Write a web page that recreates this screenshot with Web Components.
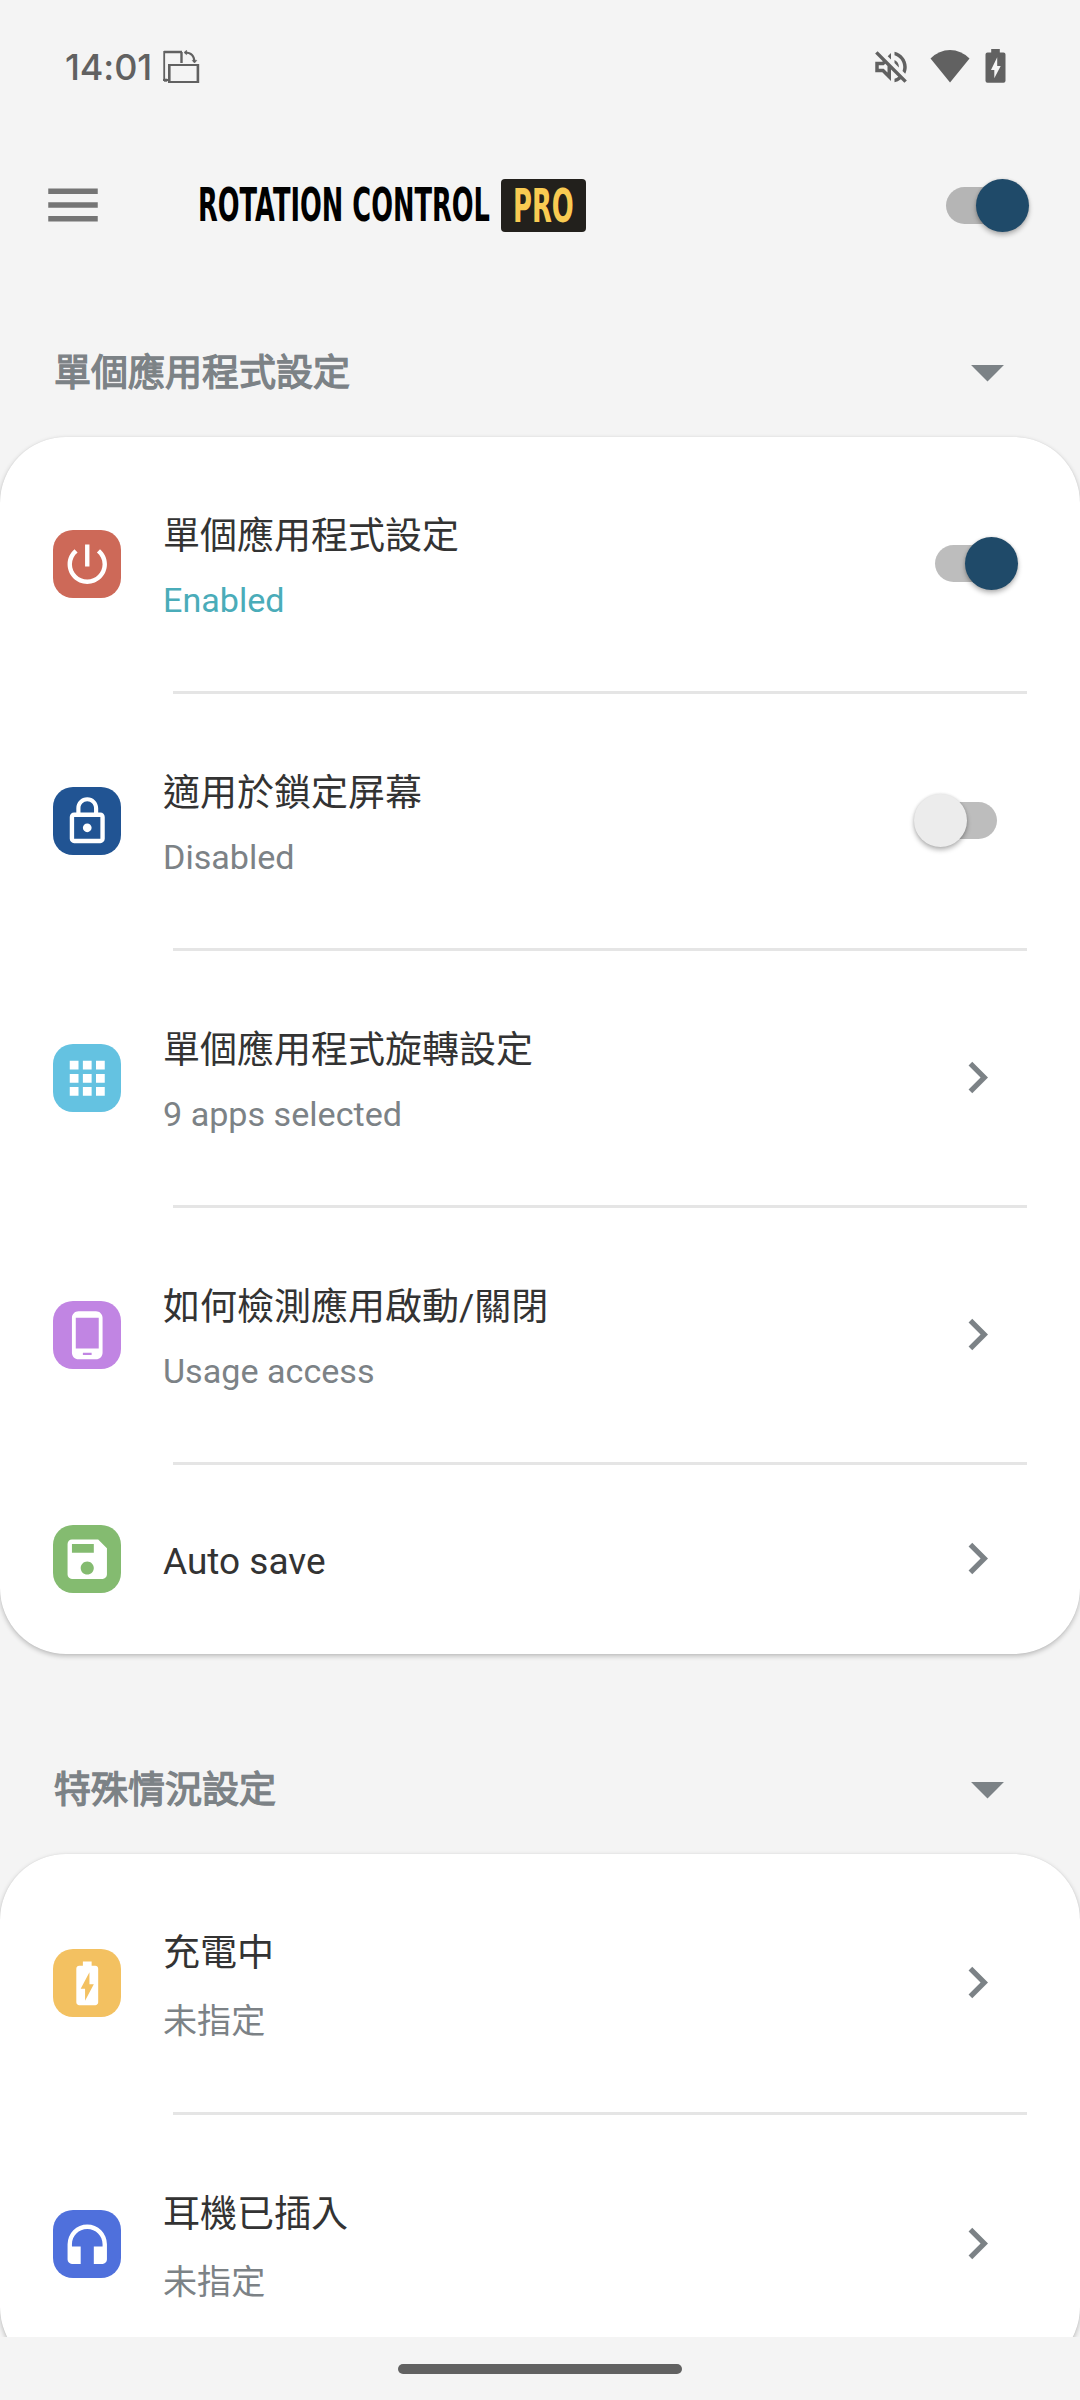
<!DOCTYPE html>
<html lang="zh-Hant">
<head>
<meta charset="utf-8">
<title>Rotation Control Pro</title>
<style>
    html, body {
        margin: 0;
        height: 100%;
    }
    body {
        --muted: #7c8286;
        --text: #333;
        --surface: #f4f4f4;
        --accent: #4aacb9;
        font-family: Roboto, "Noto Sans CJK TC", sans-serif;
        color: var(--text);
        background: var(--surface);
        overflow: hidden;
    }
</style>
</head>
<body>
<phone-screen>
    <status-bar slot="status" time="14:01"></status-bar>
    <app-bar slot="bar"></app-bar>
    <settings-section heading="單個應用程式設定">
        <settings-row icon="power" color="#cd6958" heading="單個應用程式設定" summary="Enabled" active>
            <toggle-switch slot="action" on></toggle-switch>
        </settings-row>
        <settings-row icon="lock" color="#215493" heading="適用於鎖定屏幕" summary="Disabled">
            <toggle-switch slot="action"></toggle-switch>
        </settings-row>
        <settings-row icon="apps" color="#64c2e1" heading="單個應用程式旋轉設定" summary="9 apps selected"></settings-row>
        <settings-row icon="phone" color="#c185e3" heading="如何檢測應用啟動/關閉" summary="Usage access"></settings-row>
        <settings-row icon="save" color="#84bb70" heading="Auto save"></settings-row>
    </settings-section>
    <settings-section heading="特殊情況設定">
        <settings-row icon="battery" color="#f3c161" heading="充電中" summary="未指定" tall></settings-row>
        <settings-row icon="headset" color="#4f70dc" heading="耳機已插入" summary="未指定" tall></settings-row>
    </settings-section>
    <nav-handle slot="nav"></nav-handle>
</phone-screen>

<script>
const ICONS = {
    power: 'M13 3h-2v10h2V3zm4.83 2.17l-1.42 1.42C17.99 7.86 19 9.81 19 12c0 3.87-3.13 7-7 7s-7-3.13-7-7c0-2.19 1.01-4.14 2.58-5.42L6.17 5.17C4.23 6.82 3 9.26 3 12c0 4.97 4.03 9 9 9s9-4.03 9-9c0-2.74-1.23-5.18-3.17-6.83z',
    lock: 'M12 17c1.1 0 2-.9 2-2s-.9-2-2-2-2 .9-2 2 .9 2 2 2zm6-9h-1V6c0-2.76-2.24-5-5-5S7 3.24 7 6v2H6c-1.1 0-2 .9-2 2v10c0 1.1.9 2 2 2h12c1.1 0 2-.9 2-2V10c0-1.1-.9-2-2-2zM8.9 6c0-1.71 1.39-3.1 3.1-3.1s3.1 1.39 3.1 3.1v2H8.9V6zM18 20H6V10h12v10z',
    apps: 'M4 8h4V4H4v4zm6 12h4v-4h-4v4zm-6 0h4v-4H4v4zm0-6h4v-4H4v4zm6 0h4v-4h-4v4zm6-10v4h4V4h-4zm-6 4h4V4h-4v4zm6 6h4v-4h-4v4zm0 6h4v-4h-4v4z',
    phone: 'M16 1H8C6.34 1 5 2.34 5 4v16c0 1.66 1.34 3 3 3h8c1.66 0 3-1.34 3-3V4c0-1.66-1.34-3-3-3zm-2 20h-4v-1h4v1zm3.25-3H6.75V4h10.5v14z',
    save: 'M17 3H5c-1.11 0-2 .9-2 2v14c0 1.1.89 2 2 2h14c1.1 0 2-.9 2-2V7l-4-4zm-5 16c-1.66 0-3-1.34-3-3s1.34-3 3-3 3 1.34 3 3-1.34 3-3 3zm3-10H5V5h10v4z',
    battery: 'M15.67 4H14V2h-4v2H8.33C7.6 4 7 4.6 7 5.33v15.33C7 21.4 7.6 22 8.33 22h7.33c.74 0 1.34-.6 1.34-1.33V5.33C17 4.6 16.4 4 15.67 4zM11 20v-5.5H9L13 7v5.5h2L11 20z',
    headset: 'M12 3a9 9 0 0 0-9 9v7c0 1.1.9 2 2 2h4v-8H5v-1c0-3.87 3.13-7 7-7s7 3.13 7 7v1h-4v8h4c1.1 0 2-.9 2-2v-7a9 9 0 0 0-9-9z',
    chevron: 'M10 6L8.59 7.41 13.17 12l-4.58 4.59L10 18l6-6z',
    dropdown: 'M7 10l5 5 5-5z',
    menu: 'M3 18h18v-2H3v2zm0-5h18v-2H3v2zm0-7v2h18V6H3z',
    muted: 'M4.34 2.93L2.93 4.34 7.29 8.7 7 9H3v6h4l5 5v-6.59l4.18 4.18c-.65.49-1.38.88-2.18 1.11v2.06a8.94 8.94 0 0 0 3.61-1.75l2.05 2.05 1.41-1.41L4.34 2.93zM10 15.17L7.83 13H5v-2h2.83l.88-.88L10 11.41v3.76zM19 12c0 .82-.15 1.61-.41 2.34l1.53 1.53c.56-1.17.88-2.48.88-3.87 0-4.28-2.99-7.86-7-8.77v2.06c2.89.86 5 3.54 5 6.71zm-7-8l-1.88 1.88L12 7.76zm4.5 8A4.5 4.5 0 0 0 14 7.97v1.79l2.48 2.48c.01-.08.02-.16.02-.24z'
};

/**
 * Inline svg for one of the 24px grid icons
 * @returns {string} HTML
 */
function icon(name) {
    return `<svg class='icon' viewBox='0 0 24 24' fill='currentColor'><path d='${ICONS[name]}'/></svg>`;
}

/**
 * Base for all elements: renders its template once
 */
class BaseElement extends HTMLElement {
    constructor() {
        super();
        this.attachShadow({ mode: 'open' });
    }

    connectedCallback() {
        this.shadowRoot.innerHTML = this.render();
    }
}

class PhoneScreen extends BaseElement {
    render() {
        return `
            <style>
                :host {
                    display: flex;
                    flex-direction: column;
                    height: 2400px;
                    width: 1080px;
                }
                main {
                    flex: 1;
                    min-height: 0;
                    overflow: hidden;
                    box-sizing: border-box;
                    padding-top: 28px;
                    display: flex;
                    flex-direction: column;
                    gap: 70px;
                }
            </style>
            <slot name='status'></slot>
            <slot name='bar'></slot>
            <main><slot></slot></main>
            <slot name='nav'></slot>
        `;
    }
}
customElements.define('phone-screen', PhoneScreen);

class StatusBar extends BaseElement {
    render() {
        return `
            <style>
                :host {
                    display: flex;
                    align-items: center;
                    box-sizing: border-box;
                    height: 132px;
                    padding: 2px 74px 0 65px;
                    color: #616161;
                    flex: none;
                }
                svg {
                    display: block;
                }
                .time {
                    font: 500 36px/44px Inter, sans-serif;
                    letter-spacing: -0.1px;
                    width: 98px;
                    margin-top: -1px;
                }
                .spacer {
                    flex: 1;
                }
                .icon {
                    width: 42px;
                    height: 42px;
                    margin-right: 18px;
                }
                .wifi {
                    margin-right: 15px;
                }
                .wifi, .battery {
                    margin-top: -2px;
                }
            </style>
            <span class='time'>${this.getAttribute('time')}</span>
            <svg width='37' height='34' viewBox='0 0 37 34' fill='none' stroke='currentColor'>
                <path d='M18.5 13V2M19 2H1' stroke-width='2.4'/>
                <path d='M1.2 1v30M0 30h5' stroke-width='1.8'/>
                <path d='M1 30.2h3.2' stroke-width='3'/>
                <path d='M6.3 14v19M34.9 14v19' stroke-width='2.6'/>
                <path d='M5.2 15.1h30.8M5.2 32.1h30.8' stroke-width='2'/>
                <path d='M22 2.4c6 0 9.4 3.6 9.4 9.6' stroke-width='2'/>
                <path d='M23.6 .3l-2.6 2.2 2.6 2.2zM29.2 10.4l2.3 2.6 2.3-2.6z' fill='currentColor' stroke-width='.6'/>
            </svg>
            <span class='spacer'></span>
            ${icon('muted')}
            <svg class='wifi' width='40' height='34' viewBox='0 0 40 34' fill='currentColor'>
                <path d='M20 33.5L.5 9.5Q9 1 20 1t19.5 8.5z'/>
            </svg>
            <svg class='battery' width='21' height='34' viewBox='0 0 21 34' fill='currentColor'>
                <path fill-rule='evenodd' d='M6.2 0h8.6v3.5h3.7q2 0 2 2v26.3q0 2-2 2h-16q-2 0-2-2V5.5q0-2 2-2h3.7zM12.2 8.2L6 21h3.3v8.3L15.7 17h-3.500z'/>
            </svg>
        `;
    }
}
customElements.define('status-bar', StatusBar);

/**
 * One line of text squeezed to the given width
 */
class FitText extends BaseElement {
    connectedCallback() {
        super.connectedCallback();
        const $text = this.shadowRoot.querySelector('span');
        const width = Number(this.getAttribute('width'));
        this.style.width = width + 'px';
        $text.style.transform = `scaleX(${width / $text.offsetWidth})`;
    }

    render() {
        return `
            <style>
                :host {
                    display: block;
                }
                span {
                    display: inline-block;
                    white-space: nowrap;
                    transform-origin: 0 50%;
                }
            </style>
            <span>${this.getAttribute('text')}</span>
        `;
    }
}
customElements.define('fit-text', FitText);

class AppBar extends BaseElement {
    render() {
        return `
            <style>
                :host {
                    display: flex;
                    align-items: center;
                    box-sizing: border-box;
                    height: 147px;
                    padding: 0 51px 0 40px;
                    flex: none;
                }
                .icon {
                    width: 66px;
                    height: 66px;
                    margin-top: -1px;
                    color: #757575;
                }
                .logo {
                    display: flex;
                    align-items: center;
                    margin-left: 92px;
                    gap: 11px;
                    font: bold 46.6px/55px "DejaVu Sans", sans-serif;
                    color: #000;
                }
                .pro {
                    display: flex;
                    justify-content: center;
                    width: 85px;
                    height: 53px;
                    border-radius: 4px;
                    background: #22201c;
                    color: #f9cb52;
                }
                toggle-switch {
                    margin-left: auto;
                }
            </style>
            ${icon('menu')}
            <div class='logo'>
                <fit-text text='ROTATION CONTROL' width='292'></fit-text>
                <div class='pro'><fit-text text='PRO' width='61'></fit-text></div>
            </div>
            <toggle-switch on></toggle-switch>
        `;
    }
}
customElements.define('app-bar', AppBar);

class ToggleSwitch extends BaseElement {
    render() {
        return `
            <style>
                :host {
                    display: flex;
                    align-items: center;
                    width: 83px;
                    height: 53px;
                    margin-bottom: 1px;
                }
                :host(:not([on])) {
                    flex-direction: row-reverse;
                    margin-right: 21px;
                }
                .track {
                    width: 70px;
                    height: 37px;
                    border-radius: 19px;
                    background: rgba(0, 0, 0, .26);
                    flex: none;
                }
                .thumb {
                    z-index: 1;
                    width: 53px;
                    height: 53px;
                    border-radius: 50%;
                    background: #1f4a69;
                    box-shadow: 0 3px 5px rgba(0, 0, 0, .28), 0 0 3px rgba(0, 0, 0, .12);
                    margin-left: -40px;
                    flex: none;
                }
                :host(:not([on])) .thumb {
                    background: #ececec;
                    margin: 0 -40px 0 0;
                }
            </style>
            <div class='track'></div>
            <div class='thumb'></div>
        `;
    }
}
customElements.define('toggle-switch', ToggleSwitch);

class SettingsSection extends BaseElement {
    render() {
        return `
            <style>
                :host {
                    display: block;
                    flex: none;
                }
                header {
                    display: flex;
                    align-items: center;
                    justify-content: space-between;
                    height: 130px;
                    padding: 0 53px 0 54px;
                    color: var(--muted);
                }
                h2 {
                    margin: 4px 0 0;
                    font-size: 37px;
                    line-height: 44px;
                    font-weight: normal;
                    -webkit-text-stroke: 1.3px currentColor;
                }
                .icon {
                    width: 79px;
                    height: 79px;
                    margin-top: -1px;
                }
                .card {
                    background: #fff;
                    border-radius: 66px;
                    box-shadow: 0 2px 5px rgba(0, 0, 0, .24), 0 0 1px rgba(0, 0, 0, .1);
                }
            </style>
            <header>
                <h2>${this.getAttribute('heading')}</h2>
                ${icon('dropdown')}
            </header>
            <div class='card'><slot></slot></div>
        `;
    }
}
customElements.define('settings-section', SettingsSection);

class SettingsRow extends BaseElement {
    render() {
        const summary = this.getAttribute('summary');
        return `
            <style>
                :host {
                    display: block;
                    --height: 254px;
                    --gap: 20.5px;
                }
                :host([tall]) {
                    --height: 258px;
                    --gap: 25px;
                }
                :host(:not([summary])) {
                    --height: 189px;
                }
                :host(:not(:last-child))::after {
                    content: '';
                    display: block;
                    height: 3px;
                    margin: 0 53px 0 173px;
                    background: #e5e5e5;
                }
                .row {
                    display: flex;
                    align-items: center;
                    box-sizing: border-box;
                    height: var(--height);
                    padding: 0 62px 0 53px;
                }
                :host(:not([summary])) .row {
                    padding-bottom: 1px;
                }
                .tile {
                    display: flex;
                    align-items: center;
                    justify-content: center;
                    width: 68px;
                    height: 68px;
                    border-radius: 20px;
                    background: ${this.getAttribute('color')};
                    color: #fff;
                }
                .tile .icon {
                    width: 52.5px;
                    height: 52.5px;
                }
                .body {
                    flex: 1;
                    margin-left: 42px;
                    padding-top: 6px;
                }
                .body.two {
                    align-self: flex-start;
                    padding-top: 78px;
                }
                p {
                    margin: 0;
                    font-size: 37px;
                    line-height: 44px;
                }
                .summary {
                    margin-top: var(--gap);
                    font-size: 34.125px;
                    line-height: 40px;
                    color: var(--muted);
                }
                :host([active]) .summary {
                    color: var(--accent);
                }
                slot .icon {
                    display: block;
                    width: 63px;
                    height: 63px;
                    margin: -2px 9.5px 0 0;
                    color: var(--muted);
                }
            </style>
            <div class='row'>
                <div class='tile'>${icon(this.getAttribute('icon'))}</div>
                <div class='body ${summary ? 'two' : ''}'>
                    <p>${this.getAttribute('heading')}</p>
                    ${summary ? `<p class='summary'>${summary}</p>` : ''}
                </div>
                <slot name='action'>${icon('chevron')}</slot>
            </div>
        `;
    }
}
customElements.define('settings-row', SettingsRow);

class NavHandle extends BaseElement {
    render() {
        return `
            <style>
                :host {
                    display: flex;
                    align-items: center;
                    justify-content: center;
                    height: 63px;
                    flex: none;
                    background: var(--surface);
                }
                div {
                    width: 284px;
                    height: 10px;
                    border-radius: 5px;
                    background: #616161;
                }
            </style>
            <div></div>
        `;
    }
}
customElements.define('nav-handle', NavHandle);
</script>
</body>
</html>
